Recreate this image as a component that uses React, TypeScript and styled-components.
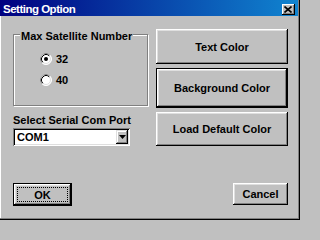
import React from "react";
import styled, { createGlobalStyle } from "styled-components";

const GlobalStyle = createGlobalStyle`
  html, body { margin: 0; padding: 0; background: #c0c0c0; }
  * { box-sizing: border-box; }
`;

const Window = styled.div`
  width: 300px;
  height: 220px;
  padding: 0 2px 2px 0;
  background: #c0c0c0;
  box-shadow: inset -1px -1px #000, inset -2px -2px #808080;
  display: flex;
  flex-direction: column;
  font-family: "Liberation Sans", Arial, sans-serif;
  font-weight: bold;
  font-size: 11px;
  color: #000;
`;

const TitleBar = styled.div`
  height: 16px;
  flex: none;
  display: flex;
  align-items: flex-start;
  justify-content: space-between;
  padding: 0 3px 0 3px;
  background: linear-gradient(to right, #000080, #1084d0);
`;

const Title = styled.span`
  color: #fff;
  font-size: 11.5px;
  letter-spacing: -0.5px;
  line-height: 16px;
  padding-top: 1px;
`;

const CloseButton = styled.div`
  width: 13px;
  height: 11px;
  margin-top: 4px;
  background: #c0c0c0;
  box-shadow: inset -1px -1px #000, inset 1px 1px #fff, inset -2px -2px #808080;
  display: flex;
  align-items: center;
  justify-content: center;
  padding-right: 1px;
`;

const Body = styled.div`
  flex: 1;
  display: flex;
  flex-direction: column;
  padding: 13px 10px 12px 13px;
  box-shadow: inset 1px 0 #fff;
`;

const Main = styled.div`
  display: grid;
  grid-template-columns: 135px 132px;
  column-gap: 8px;
  align-items: start;
`;

const LeftColumn = styled.div`
  display: flex;
  flex-direction: column;
  align-items: flex-start;
`;

const RightColumn = styled.div`
  display: flex;
  flex-direction: column;
  gap: 4px;
`;

const GroupBox = styled.div`
  position: relative;
  align-self: stretch;
  margin-top: 5px;
  height: 72px;
  border: 1px solid #808080;
  box-shadow: inset 1px 1px #fff, 1px 1px #fff;
  padding: 17px 0 0 26px;
  display: flex;
  flex-direction: column;
  gap: 7px;
`;

const Legend = styled.span`
  position: absolute;
  top: -5px;
  left: 6px;
  padding: 0 1px;
  line-height: 13px;
  background: #c0c0c0;
`;

const RadioRow = styled.label`
  height: 14px;
  display: flex;
  align-items: center;
  gap: 4px;
  line-height: 14px;
`;

const FieldLabel = styled.div`
  margin-top: 8px;
  line-height: 13px;
`;

const Combo = styled.div`
  margin-top: 1px;
  width: 117px;
  height: 18px;
  display: flex;
  align-items: stretch;
  padding: 2px;
  background: #fff;
  box-shadow: inset 1px 1px #808080, inset -1px -1px #fff, inset 2px 2px #000, inset -2px -2px #dfdfdf;
`;

const ComboText = styled.span`
  flex: 1;
  padding-left: 2px;
  line-height: 14px;
`;

const DropButton = styled.div`
  width: 12px;
  background: #c0c0c0;
  box-shadow: inset -1px -1px #000, inset 1px 1px #dfdfdf, inset -2px -2px #808080, inset 2px 2px #fff;
  display: flex;
  align-items: center;
  justify-content: center;
`;

const PushButton = styled.button<{ $default?: boolean; $h: number; $w?: number; $focus?: boolean }>`
  position: relative;
  height: ${(p) => p.$h}px;
  width: ${(p) => (p.$w ? `${p.$w}px` : "100%")};
  margin: 0;
  padding: 0;
  font: inherit;
  color: #000;
  background: #c0c0c0;
  border: ${(p) => (p.$default ? "1px solid #000" : "none")};
  box-shadow: inset -1px -1px #000, inset 1px 1px #fff, inset -2px -2px #808080, inset 2px 2px #dfdfdf;
  cursor: default;
  &::after {
    content: "";
    display: ${(p) => (p.$focus ? "block" : "none")};
    position: absolute;
    inset: 3px;
    border: 1px dotted #000;
  }
`;

const Footer = styled.div`
  margin-top: auto;
  display: flex;
  justify-content: space-between;
  align-items: flex-start;
`;

const Radio: React.FC<{ checked?: boolean }> = ({ checked }) => (
  <svg width="12" height="12" viewBox="0 0 12 12">
    <circle cx="6" cy="6" r="5.5" fill="#fff" stroke="#fff" strokeWidth="1" />
    <path d="M2.11 9.89 A5.5 5.5 0 0 1 9.89 2.11" fill="none" stroke="#808080" strokeWidth="1" />
    <circle cx="6" cy="6" r="4.5" fill="#fff" stroke="#dfdfdf" strokeWidth="1" />
    <path d="M2.82 9.18 A4.5 4.5 0 0 1 9.18 2.82" fill="none" stroke="#000" strokeWidth="1" />
    {checked && <circle cx="6" cy="6" r="2" fill="#000" />}
  </svg>
);

const CloseGlyph = () => (
  <svg width="8" height="7" viewBox="0 0 8 7">
    <path d="M0.5 0.5 L7.5 6.5 M7.5 0.5 L0.5 6.5" stroke="#000" strokeWidth="1.6" fill="none" />
  </svg>
);

const DownArrow = () => (
  <svg width="7" height="4" viewBox="0 0 7 4">
    <polygon points="0,0 7,0 3.5,4" fill="#000" />
  </svg>
);

export default function App() {
  return (
    <>
      <GlobalStyle />
      <Window>
        <TitleBar>
          <Title>Setting Option</Title>
          <CloseButton>
            <CloseGlyph />
          </CloseButton>
        </TitleBar>
        <Body>
          <Main>
            <LeftColumn>
              <GroupBox>
                <Legend>Max Satellite Number</Legend>
                <RadioRow>
                  <Radio checked />
                  <span>32</span>
                </RadioRow>
                <RadioRow>
                  <Radio />
                  <span>40</span>
                </RadioRow>
              </GroupBox>
              <FieldLabel>Select Serial Com Port</FieldLabel>
              <Combo>
                <ComboText>COM1</ComboText>
                <DropButton>
                  <DownArrow />
                </DropButton>
              </Combo>
            </LeftColumn>
            <RightColumn>
              <PushButton $h={35}>Text Color</PushButton>
              <PushButton $h={40} $default>
                Background Color
              </PushButton>
              <PushButton $h={34}>Load Default Color</PushButton>
            </RightColumn>
          </Main>
          <Footer>
            <PushButton $h={23} $w={59} $default $focus>
              OK
            </PushButton>
            <PushButton $h={22} $w={55}>
              Cancel
            </PushButton>
          </Footer>
        </Body>
      </Window>
    </>
  );
}
